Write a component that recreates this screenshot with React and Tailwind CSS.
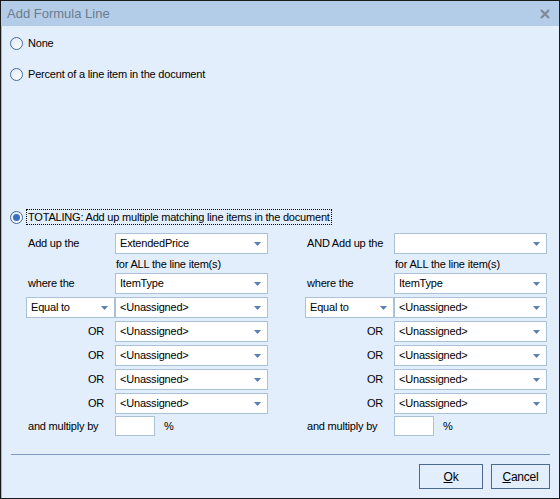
const FONT = { fontFamily: '"Liberation Sans", Arial, sans-serif' };

function Radio({ checked }) {
  return (
    <span className="relative inline-flex h-[13px] w-[13px] shrink-0 items-center justify-center rounded-full border border-[#3f6aa3] bg-gradient-to-br from-[#dfe9f5] to-white">
      {checked && <span className="h-[7px] w-[7px] rounded-full bg-[#3a6fc0]" />}
    </span>
  );
}

function Combo({ value, className = '' }) {
  return (
    <div className={`flex h-[21px] items-center justify-between border border-[#abc0da] bg-white pl-[4px] pr-[6px] ${className}`}>
      <span className="truncate">{value}</span>
      <svg width="7" height="4" viewBox="0 0 7 4" className="shrink-0">
        <path d="M0 0h7L3.5 4z" fill="#5b7fb5" />
      </svg>
    </div>
  );
}

function Column({ title, firstValue }) {
  return (
    <div className="flex w-[242px] flex-col">
      <div className="flex items-center">
        <span className="w-[89px] pl-[2px]">{title}</span>
        <Combo value={firstValue} className="w-[153px]" />
      </div>
      <div className="flex h-[19px] items-center pl-[90px] pt-[1px]">for ALL the line item(s)</div>
      <div className="flex items-center">
        <span className="w-[89px] pl-[2px]">where the</span>
        <Combo value="ItemType" className="w-[153px]" />
      </div>
      <div className="mt-[3px] flex flex-col gap-[3px]">
        <div className="flex items-center">
          <Combo value="Equal to" className="w-[89px]" />
          <Combo value="<Unassigned>" className="w-[153px]" />
        </div>
        {[0, 1, 2, 3].map((i) => (
          <div key={i} className="flex items-center">
            <span className="w-[80px] pr-[2px] text-right">OR</span>
            <span className="w-[9px]" />
            <Combo value="<Unassigned>" className="w-[153px]" />
          </div>
        ))}
      </div>
      <div className="mt-[2px] flex items-center">
        <span className="w-[89px] pl-[2px]">and multiply by</span>
        <div className="h-[20px] w-[40px] border border-[#abc0da] bg-white" />
        <span className="pl-[9px]">%</span>
      </div>
    </div>
  );
}

export default function App() {
  return (
    <div className="h-[499px] w-[560px] text-[11px] tracking-[-0.2px] text-black" style={FONT}>
      <div className="flex h-full w-full flex-col border border-[#1a1a1a] bg-[#e2eefc]">
        {/* Title bar */}
        <div className="flex h-[25px] shrink-0 items-center justify-between bg-[#b3cde9] pl-[6px] pr-[9px]">
          <span className="text-[13px] tracking-normal text-[#6e7b8c]">Add Formula Line</span>
          <svg width="10" height="10" viewBox="0 0 10 10">
            <path d="M1 1l8 8M9 1l-8 8" stroke="#7d8a99" strokeWidth="2.2" />
          </svg>
        </div>

        {/* Body */}
        <div className="flex flex-1 flex-col border-l border-[#9fb6d3]">
          <div className="mt-[9px] flex h-[16px] items-center gap-[5px] pl-[8px]">
            <Radio />
            <span>None</span>
          </div>
          <div className="mt-[15px] flex h-[16px] items-center gap-[5px] pl-[8px]">
            <Radio />
            <span>Percent of a line item in the document</span>
          </div>

          <div className="mt-[127px] flex h-[16px] items-center gap-[3px] pl-[8px]">
            <Radio checked />
            <span className="border border-dotted border-black px-[1px] leading-[14px]">
              TOTALING: Add up multiple matching line items in the document
            </span>
          </div>

          <div className="mt-[8px] flex gap-[37px] pl-[24px]">
            <Column title="Add up the" firstValue="ExtendedPrice" />
            <Column title="AND Add up the" firstValue="" />
          </div>

          <div className="mx-[9px] mt-[18px] h-px bg-[#7f9bbd]" />

          <div className="mt-[9px] flex justify-end gap-[8px] pr-[9px]">
            <button className="h-[25px] w-[64px] border border-[#4a6a92] bg-[#e2eefc] text-[12px]">
              <span className="underline">O</span>k
            </button>
            <button className="h-[25px] w-[59px] border border-[#4a6a92] bg-[#e2eefc] text-[12px]">
              <span className="underline">C</span>ancel
            </button>
          </div>
        </div>
      </div>
    </div>
  );
}
